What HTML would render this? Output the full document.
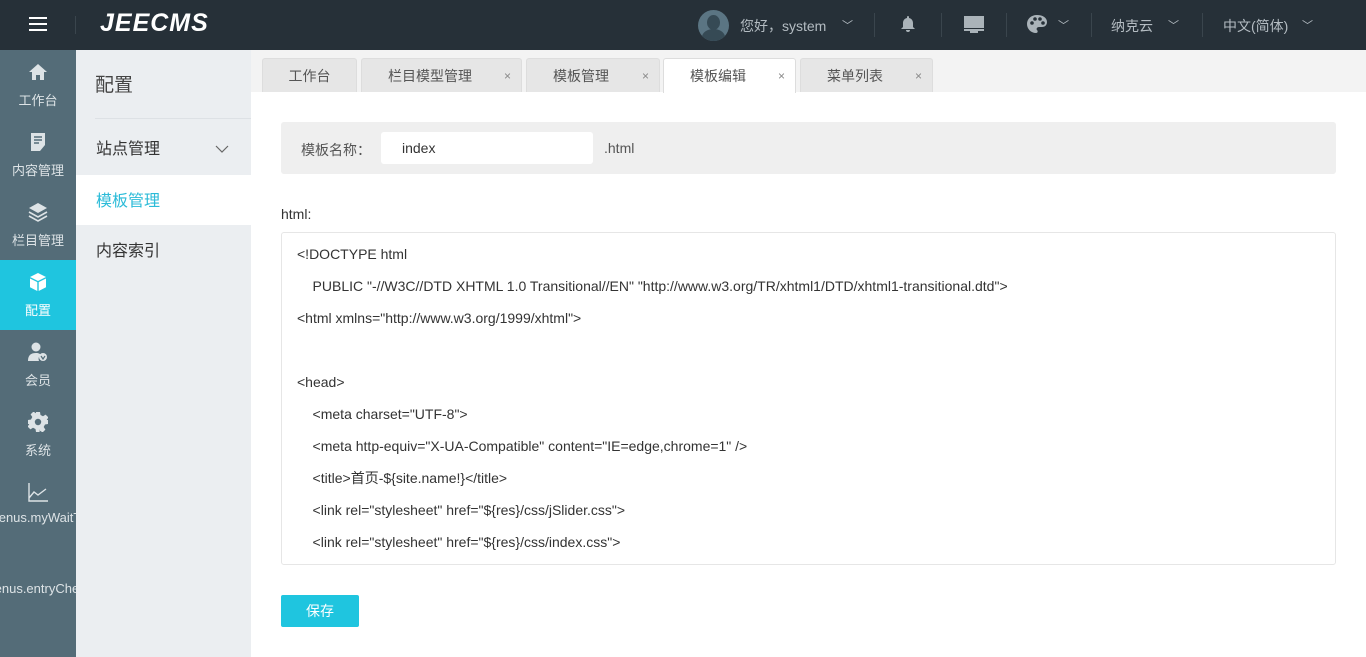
<!DOCTYPE html>
<html><head><meta charset="utf-8"><style>
*{margin:0;padding:0;box-sizing:border-box}
body{width:1366px;height:657px;overflow:hidden;font-family:"Liberation Sans","Noto Sans CJK SC",sans-serif;background:#fff;position:relative;font-size:14px}
.top{position:absolute;left:0;top:0;width:1366px;height:50px;background:#263038;color:#b4bcc2}
.side{position:absolute;left:0;top:50px;width:76px;height:607px;background:#546c78;overflow:hidden}
.si{position:absolute;left:0;width:76px;height:70px;text-align:center;color:#dde3e6;font-size:13px}
.si .ic{position:absolute;left:28px;top:12px;width:20px;height:20px}
.si .t{position:absolute;left:-20px;width:116px;top:40px;text-align:center;white-space:nowrap}
.sub{position:absolute;left:76px;top:50px;width:175px;height:607px;background:#ebeef1}
.tabs{position:absolute;left:251px;top:50px;width:1115px;height:42px;background:#f3f3f3}
.tab{position:absolute;top:8px;height:34px;background:#e6e6e6;border:1px solid #ddd;border-bottom:none;border-radius:3px 3px 0 0;color:#555;font-size:14px;line-height:34px}
.tab .x{position:absolute;right:10px;top:0;font-size:12px;color:#888}
.code div{height:32px;line-height:32px;font-size:14px;color:#333;white-space:pre}
</style></head><body>
<div class="top">
 <div style="position:absolute;left:29px;top:17px;width:18px;height:2px;background:#fff;box-shadow:0 6px 0 #fff,0 12px 0 #fff"></div>
 <div style="position:absolute;left:75px;top:16px;width:1px;height:18px;background:#3a454d"></div>
 <div style="position:absolute;left:100px;top:9px;color:#fff;font-size:25px;font-weight:bold;font-style:italic;letter-spacing:1px">JEECMS</div>
 <div style="position:absolute;left:698px;top:10px;width:31px;height:31px;border-radius:50%;background:#5b7583;overflow:hidden"><div style="position:absolute;left:9px;top:5px;width:13px;height:15px;border-radius:50%;background:#364a55"></div><div style="position:absolute;left:4px;top:19px;width:23px;height:16px;border-radius:50%;background:#364a55"></div></div>
 <div style="position:absolute;left:740px;top:16px;font-size:14px">您好，system</div>
 <div style="position:absolute;left:842px;top:17px;font-size:11px">﹀</div>
 <div style="position:absolute;left:874px;top:13px;width:1px;height:24px;background:#3a454d"></div>
 <svg style="position:absolute;left:900px;top:15px" width="16" height="18" viewBox="0 0 16 18"><path d="M8 1a1 1 0 0 1 1 1v1c2.5.5 4 2.5 4 5v4l2 2H1l2-2V8c0-2.5 1.5-4.5 4-5V2a1 1 0 0 1 1-1zM6 15h4a2 2 0 0 1-4 0z" fill="#aab3b9"/></svg>
 <div style="position:absolute;left:941px;top:13px;width:1px;height:24px;background:#3a454d"></div>
 <svg style="position:absolute;left:963px;top:15px" width="22" height="18" viewBox="0 0 22 18"><rect x="1" y="1" width="20" height="12" fill="#aab3b9"/><rect x="1" y="14" width="20" height="2" fill="#aab3b9"/><rect x="7" y="16" width="8" height="2" fill="#aab3b9"/></svg>
 <div style="position:absolute;left:1006px;top:13px;width:1px;height:24px;background:#3a454d"></div>
 <svg style="position:absolute;left:1026px;top:14px" width="22" height="20" viewBox="0 0 22 20"><path d="M11 1C5 1 1 5 1 10s4 9 9 9c2 0 2-2 1-3s0-3 2-3h3c3 0 5-2 5-5 0-4-4-7-10-7z" fill="#aab3b9"/><circle cx="6" cy="9" r="1.8" fill="#263038"/><circle cx="9" cy="5" r="1.8" fill="#263038"/><circle cx="14" cy="5" r="1.8" fill="#263038"/><circle cx="17" cy="9" r="1.8" fill="#263038"/></svg>
 <div style="position:absolute;left:1058px;top:17px;font-size:11px">﹀</div>
 <div style="position:absolute;left:1091px;top:13px;width:1px;height:24px;background:#3a454d"></div>
 <div style="position:absolute;left:1111px;top:16px">纳克云</div>
 <div style="position:absolute;left:1168px;top:17px;font-size:11px">﹀</div>
 <div style="position:absolute;left:1202px;top:13px;width:1px;height:24px;background:#3a454d"></div>
 <div style="position:absolute;left:1223px;top:16px">中文(简体)</div>
 <div style="position:absolute;left:1302px;top:17px;font-size:11px">﹀</div>
</div>
<div class="side">
 <div class="si" style="top:0"><svg class="ic" viewBox="0 0 20 20"><path d="M10 2L1 10h3v8h4v-5h4v5h4v-8h3z" fill="#dde3e6"/></svg><div class="t">工作台</div></div>
 <div class="si" style="top:70px"><svg class="ic" viewBox="0 0 20 20"><path d="M3 1h14v12l-5 6H3z" fill="#dde3e6"/><path d="M6 5h8M6 8h8M6 11h5" stroke="#546c78" stroke-width="1.5"/></svg><div class="t">内容管理</div></div>
 <div class="si" style="top:140px"><svg class="ic" viewBox="0 0 20 20"><path d="M10 1l9 5-9 5-9-5z" fill="#dde3e6"/><path d="M1 10l9 5 9-5M1 14l9 5 9-5" stroke="#dde3e6" stroke-width="1.6" fill="none"/></svg><div class="t">栏目管理</div></div>
 <div class="si" style="top:210px;background:#1fc5df;color:#fff"><svg class="ic" viewBox="0 0 20 20"><path d="M10 1l8 4-8 4-8-4z" fill="#fff"/><path d="M2 6.5l7.3 3.6V19L2 15.2zM18 6.5l-7.3 3.6V19l7.3-3.8z" fill="#fff"/></svg><div class="t">配置</div></div>
 <div class="si" style="top:280px"><svg class="ic" viewBox="0 0 20 20"><circle cx="8" cy="5" r="4.5" fill="#dde3e6"/><path d="M0 19c0-6 3-8 8-8 3 0 4 1 5 2-2 1-3 3-2 6z" fill="#dde3e6"/><circle cx="15" cy="15" r="4" fill="#dde3e6"/><path d="M13 14l2 3 2-3" stroke="#546c78" stroke-width="1.2" fill="none"/></svg><div class="t">会员</div></div>
 <div class="si" style="top:350px"><svg class="ic" viewBox="0 0 20 20"><path d="M8 0h4l.5 3 2.5 1.3 2.6-1.7 2.8 2.8-1.7 2.6L20 8v4l-3 .5-1.3 2.5 1.7 2.6-2.8 2.8-2.6-1.7L12 17l-.5 3H8l-.5-3-2.5-1.3-2.6 1.7L-.4 14.6 1.3 12 0 12V8l3-.5L4.3 5 2.6 2.4 5.4-.4 8 1.3z" fill="#dde3e6"/><circle cx="10" cy="10" r="3.2" fill="#546c78"/></svg><div class="t">系统</div></div>
 <div class="si" style="top:420px"><svg class="ic" viewBox="0 0 20 20"><path d="M1 1v18h19M1 16l5-6 4 3 8-6" stroke="#dde3e6" stroke-width="1.4" fill="none"/></svg><div class="t" style="left:-14px">menus.myWaitTask</div></div>
 <div class="si" style="top:490px"><div class="t" style="top:41px;left:-20px">menus.entryCheck</div></div>
</div>
<div class="sub">
 <div style="position:absolute;left:19px;top:20px;font-size:19px;color:#444">配置</div>
 <div style="position:absolute;left:19px;top:68px;width:156px;height:1px;background:#dde1e5"></div>
 <div style="position:absolute;left:20px;top:85px;font-size:16px;color:#333">站点管理</div>
 <svg style="position:absolute;left:139px;top:95px" width="14" height="8" viewBox="0 0 14 8"><path d="M1 1l6 6 6-6" stroke="#666" stroke-width="1.2" fill="none"/></svg>
 <div style="position:absolute;left:0;top:125px;width:175px;height:50px;background:#fff"></div>
 <div style="position:absolute;left:20px;top:137px;font-size:16px;color:#2bbbd8">模板管理</div>
 <div style="position:absolute;left:20px;top:187px;font-size:16px;color:#333">内容索引</div>
</div>
<div class="tabs">
 <div class="tab" style="left:11px;width:95px;text-align:center">工作台</div>
 <div class="tab" style="left:110px;width:161px;padding-left:26px">栏目模型管理<span class="x">×</span></div>
 <div class="tab" style="left:275px;width:134px;padding-left:26px">模板管理<span class="x">×</span></div>
 <div class="tab" style="left:412px;width:133px;padding-left:26px;background:#fff;height:35px">模板编辑<span class="x">×</span></div>
 <div class="tab" style="left:549px;width:133px;padding-left:26px">菜单列表<span class="x">×</span></div>
</div>
<div style="position:absolute;left:281px;top:122px;width:1055px;height:52px;background:#efefef;border-radius:3px">
 <div style="position:absolute;left:20px;top:18px;color:#555">模板名称：</div>
 <div style="position:absolute;left:100px;top:10px;width:212px;height:32px;background:#fff;border-radius:3px;padding-left:21px;line-height:32px;color:#333">index</div>
 <div style="position:absolute;left:323px;top:18px;color:#555">.html</div>
</div>
<div style="position:absolute;left:281px;top:206px;color:#333">html:</div>
<div class="code" style="position:absolute;left:281px;top:232px;width:1055px;height:333px;border:1px solid #e6e6e6;border-radius:3px;padding:5px 15px;overflow:hidden">
<div>&lt;!DOCTYPE html</div>
<div>    PUBLIC "-//W3C//DTD XHTML 1.0 Transitional//EN" "http://www.w3.org/TR/xhtml1/DTD/xhtml1-transitional.dtd"&gt;</div>
<div>&lt;html xmlns="http://www.w3.org/1999/xhtml"&gt;</div>
<div> </div>
<div>&lt;head&gt;</div>
<div>    &lt;meta charset="UTF-8"&gt;</div>
<div>    &lt;meta http-equiv="X-UA-Compatible" content="IE=edge,chrome=1" /&gt;</div>
<div>    &lt;title&gt;首页-${site.name!}&lt;/title&gt;</div>
<div>    &lt;link rel="stylesheet" href="${res}/css/jSlider.css"&gt;</div>
<div>    &lt;link rel="stylesheet" href="${res}/css/index.css"&gt;</div>
</div>
<div style="position:absolute;left:281px;top:595px;width:78px;height:32px;background:#1fc5df;color:#fff;border-radius:2px;text-align:center;line-height:32px;font-size:14px">保存</div>
</body></html>
